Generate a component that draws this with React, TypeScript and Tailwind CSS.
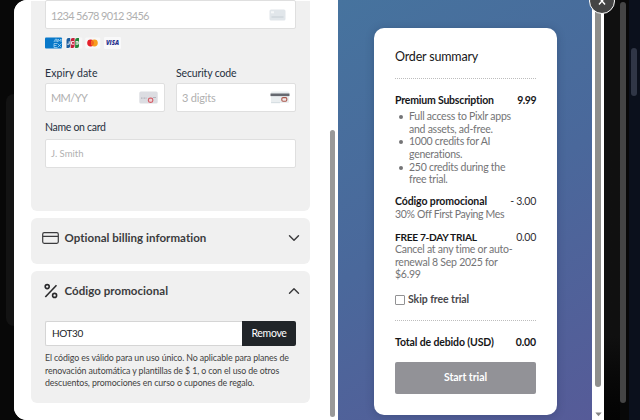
import React, { useState } from "react";
import { ChevronDown, ChevronUp } from "lucide-react";

const perks = [
  ["Full access to Pixlr apps", "and assets, ad-free."],
  ["1000 credits for AI", "generations."],
  ["250 credits during the", "free trial."],
];

function CardBrands() {
  return (
    <div className="mt-[8px] flex h-[12px] gap-[2px]">
      {/* Amex */}
      <svg width="18" height="12" viewBox="0 0 18 12">
        <rect x="0" y="0.5" width="17" height="11" rx="1" fill="#0878c9" />
        <path d="M9 5 10.5 2h1l1 3M10 4h2M13 5V2l1.5 2L16 2v3M12 6.5H9v4h3M9 8.5h2.5M12.5 6.5l4 4M16.5 6.5l-4 4" stroke="#b5dcf5" strokeWidth="0.7" fill="none" />
      </svg>
      {/* JCB */}
      <svg width="18" height="12" viewBox="0 0 18 12">
        <rect x="0.3" y="0.5" width="17" height="11" rx="1" fill="#f7f7f7" />
        <path d="M1.500 11V3a2 2 0 0 1 2-2h1.700v8a2 2 0 0 1-2 2z" fill="#1d5d9c" />
        <path d="M5.700 11V3a2 2 0 0 1 2-2h1.900v8a2 2 0 0 1-2 2z" fill="#c4213b" />
        <path d="M10.100 11V3a2 2 0 0 1 2-2h1.900v8a2 2 0 0 1-2 2z" fill="#23863c" />
        <path d="M4.200 4.300v2.900H2.200M9 4.600H6.500v2.600h2.500M10.700 4.600h2.500v2.600h-2.500M10.700 5.900h2.500" stroke="#fff" strokeWidth="0.9" fill="none" />
      </svg>
      {/* Mastercard */}
      <svg width="18" height="12" viewBox="0 0 18 12">
        <rect x="0.3" y="0.5" width="15" height="11" rx="1" fill="#f8f8f8" />
        <circle cx="5.600" cy="6" r="3.4" fill="#e5202b" />
        <circle cx="9.400" cy="6" r="3.4" fill="#f79d1d" />
        <path d="M7.500 3.180a3.400 3.400 0 0 1 0 5.640 3.400 3.400 0 0 1 0-5.640z" fill="#f4671f" />
      </svg>
      {/* Visa */}
      <div className="-ml-px flex h-[12px] w-[17px] items-center justify-center rounded-[1px] bg-[#f9f9fa] font-['Open_Sans',sans-serif] text-[6px] font-extrabold italic leading-none text-[#28338f]">
        VISA
      </div>
    </div>
  );
}

function NumberIcon() {
  return (
    <svg width="17" height="12" viewBox="0 0 17 12">
      <rect x="0.5" y="0.5" width="16" height="11" rx="1.5" fill="#e1e6ea" />
      <rect x="2" y="2.3" width="3" height="2" fill="#f5f7f8" />
      <path d="M2.500 8h12" stroke="#c6ced4" strokeWidth="1" />
    </svg>
  );
}

function ExpiryIcon() {
  return (
    <svg width="19" height="13" viewBox="0 0 19 13">
      <rect x="0.3" y="0.5" width="18.400" height="12" rx="1.5" fill="#dcdde2" />
      <path d="M2 7.200h6" stroke="#b4b5bd" strokeWidth="1.200" strokeDasharray="1 0.500" />
      <path d="M14 6.500h3" stroke="#b4b5bd" strokeWidth="1" />
      <rect x="9.400" y="7.200" width="4.400" height="4.200" rx="1.800" fill="#f0d5d8" stroke="#d4626c" strokeWidth="1.200" />
    </svg>
  );
}

function CvcIcon() {
  return (
    <svg width="20" height="13" viewBox="0 0 20 13">
      <rect x="1" y="0.500" width="18" height="11.500" rx="1.300" fill="#eaeef0" />
      <path d="M1 11.700h9" stroke="#ccd5da" strokeWidth="0.800" />
      <rect x="0.500" y="2.500" width="19" height="2.600" fill="#65686f" />
      <rect x="11.800" y="6.600" width="5" height="3.700" rx="1.200" fill="#f4e8e6" stroke="#a9574c" strokeWidth="1.100" />
    </svg>
  );
}

interface FieldProps {
  placeholder: string;
  className: string;
  icon?: React.ReactNode;
}

function Field({ placeholder, className, icon }: FieldProps) {
  return (
    <div className="flex h-[29px] w-full items-center justify-between rounded-[2px] border border-[#dfdfdf] bg-white pl-[5px]">
      <span className={`whitespace-nowrap text-[#b0b0b0] ${className}`}>{placeholder}</span>
      {icon}
    </div>
  );
}

function PaymentForm() {
  return (
    <div className="flex h-[420px] w-[324px] shrink-0 justify-between overflow-hidden bg-white">
      <div className="ml-[17px] flex w-[279px] flex-col gap-[7px] pt-px">
        <section className="h-[210px] shrink-0 rounded-b-[6px] bg-[#f0f0f0] px-[14px]">
          <div className="-mt-px">
            <Field placeholder="1234 5678 9012 3456" className="pt-[3px] text-[11px] tracking-[-0.67px]" icon={<div className="mr-[9px]"><NumberIcon /></div>} />
          </div>
          <CardBrands />
          <div className="mt-[17px] flex gap-[11px] text-[#273040]">
            <div className="w-[120px]">
              <div className="mb-[3px] h-[14px] whitespace-nowrap text-[10.500px] leading-[14px] tracking-[0.08px]">Expiry date</div>
              <Field placeholder="MM/YY" className="pt-[2px] text-[11px] tracking-[-0.6px]" icon={<div className="mr-[6px]"><ExpiryIcon /></div>} />
            </div>
            <div className="w-[120px]">
              <div className="mb-[3px] h-[14px] whitespace-nowrap text-[10.500px] leading-[14px] tracking-[-0.15px]">Security code</div>
              <Field placeholder="3 digits" className="pt-[2px] text-[11px] tracking-[-0.2px]" icon={<div className="mr-[5px]"><CvcIcon /></div>} />
            </div>
          </div>
          <div className="mb-[5px] mt-[8px] h-[14px] text-[10.500px] leading-[14px] tracking-[-0.3px] text-[#273040]">Name on card</div>
          <Field placeholder="J. Smith" className="pt-px text-[9.500px]" />
        </section>

        <section className="flex h-[46px] shrink-0 items-start rounded-[6px] bg-[#f0f0f0] pl-[11px] pr-[10px] pt-[10px]">
          <svg width="17" height="20" viewBox="0 0 17 20" fill="none" stroke="#3b3b3d" strokeWidth="1.200">
            <rect x="0.700" y="4.700" width="15.600" height="10.600" rx="1.500" />
            <path d="M0.700 8.300h15.600" />
          </svg>
          <h3 className="ml-[5.500px] flex-1 whitespace-nowrap text-[11.500px] font-bold leading-5 tracking-[0.04px] text-[#3b3b3d]">Optional billing information</h3>
          <ChevronDown className="-mr-[3px] h-5 w-[18px] text-[#3b3b3d]" strokeWidth={1.9} />
        </section>

        <section className="h-[132px] shrink-0 rounded-[6px] bg-[#f0f0f0]">
          <div className="flex items-start pl-[13px] pr-[10px] pt-[10px]">
            <svg width="14" height="20" viewBox="0 0 14 20" fill="none" stroke="#29292b" strokeWidth="1.600">
              <path d="M12.500 4.200 1.300 16" />
              <circle cx="3.200" cy="5.600" r="2" />
              <circle cx="10.600" cy="14.400" r="2" />
            </svg>
            <h3 className="ml-[6.500px] flex-1 whitespace-nowrap text-[11.500px] font-bold leading-5 tracking-[0.05px] text-[#3b3b3d]">Código promocional</h3>
            <ChevronUp className="-mr-[3px] h-5 w-[18px] text-[#3b3b3d]" strokeWidth={1.9} />
          </div>
          <div className="mx-[14px] mt-[20px] flex h-[25px]">
            <div className="flex flex-1 items-center rounded-l-[2px] border border-r-0 border-[#d5d5d5] bg-white pl-[6px] text-[10px] tracking-[-0.4px] text-[#202226]">HOT30</div>
            <button className="w-[54px] rounded-r-[2px] bg-[#212529] text-[10.500px] tracking-[-0.3px] text-white">Remove</button>
          </div>
          <p className="ml-[14px] mt-[6px] whitespace-nowrap text-[8.800px] leading-[12.600px] tracking-[-0.105px] text-[#3f3f41]">
            <span className="block">El código es válido para un uso único. No aplicable para planes de</span>
            <span className="block">renovación automática y plantillas de $ 1, o con el uso de otros</span>
            <span className="block">descuentos, promociones en curso o cupones de regalo.</span>
          </p>
        </section>
      </div>
      <div className="mr-[3px] mt-[130px] h-[287px] w-[5px] rounded-full bg-[#999999]" />
    </div>
  );
}

function OrderSummary() {
  const [skip, setSkip] = useState(false);

  return (
    <div className="flex h-[420px] w-[254px] shrink-0 items-start bg-linear-[150deg,#46739e_0%,#4a689b_50%,#565b98_100%] pl-9 pt-7">
      <div className="h-[387px] w-[183px] rounded-[10px] bg-white px-[21px] pt-[20px] text-[10.500px] tracking-[-0.25px] text-[#747476] shadow-[0_1px_8px_rgba(20,30,60,0.25)]">
        <h2 className="h-[18px] whitespace-nowrap text-[12.500px] leading-[18px] tracking-[-0.18px] text-[#171719]">Order summary</h2>
        <div className="mt-[12px] border-t border-dotted border-[#bdbdbd]" />

        <div className="mt-[14px] flex h-[14px] justify-between whitespace-nowrap font-bold leading-[14px] tracking-[-0.2px] text-[#161618]">
          <span>Premium Subscription</span>
          <span className="tracking-[-0.5px]">9.99</span>
        </div>
        <ul className="mt-[3px] whitespace-nowrap leading-[12.650px]">
          {perks.map(([first, second]) => (
            <li key={first} className="flex">
              <span className="ml-[4px] mt-[5px] h-[4px] w-[4px] rounded-full bg-[#747476]" />
              <div className="ml-[6px]">
                <span className="block">{first}</span>
                <span className="block">{second}</span>
              </div>
            </li>
          ))}
        </ul>

        <div className="mt-[9.500px] whitespace-nowrap leading-[12.600px]">
          <div className="flex justify-between text-[#303033]">
            <span className="font-bold tracking-[-0.1px] text-[#161618]">Código promocional</span>
            <span>- 3.00</span>
          </div>
          <div className="tracking-[-0.35px]">30% Off First Paying Mes</div>
        </div>

        <div className="mt-[10px] whitespace-nowrap leading-[12.600px]">
          <div className="flex justify-between text-[#303033]">
            <span className="text-[10.200px] font-bold tracking-[-0.3px] text-[#161618]">FREE 7-DAY TRIAL</span>
            <span>0.00</span>
          </div>
          <div>Cancel at any time or auto-</div>
          <div>renewal 8 Sep 2025 for</div>
          <div>$6.99</div>
        </div>

        <label className="mt-[11.500px] flex h-[14px] items-center whitespace-nowrap font-bold tracking-[-0.07px] text-[#48484b]">
          <input
            type="checkbox"
            checked={skip}
            onChange={() => setSkip(!skip)}
            className="mr-[3px] h-[10px] w-[10px] appearance-none rounded-[1px] border border-[#929294] bg-white checked:bg-[#48484b]"
          />
          Skip free trial
        </label>
        <div className="mt-[13px] border-t border-dotted border-[#bdbdbd]" />
        <div className="mt-[14px] flex h-[14px] justify-between whitespace-nowrap font-bold leading-[14px] tracking-[-0.12px] text-[#161618]">
          <span>Total de debido (USD)</span>
          <span>0.00</span>
        </div>
        <button className="mt-[13px] h-[32px] w-full rounded-[2px] bg-[#929297] font-bold tracking-[-0.05px] text-white">Start trial</button>
      </div>
    </div>
  );
}

export default function App() {
  return (
    <div className="relative flex h-[420px] w-[640px] overflow-hidden bg-[#080808] font-['Lato',sans-serif]">
      <div className="flex h-full w-[14px] shrink-0 items-center">
        <div className="ml-[6px] h-[232px] w-2 rounded-l-[8px] bg-[#131313]" />
      </div>
      <div className="flex h-full w-[590px] shrink-0 overflow-hidden rounded-l-[13px] bg-white">
        <PaymentForm />
        <OrderSummary />
        <div className="flex w-[12px] flex-col items-center bg-white">
          <div className="h-[387px] w-[6px] rounded-b-full bg-[#8e8e8c]" />
          <svg className="mt-[25px]" width="7" height="5" viewBox="0 0 7 5">
            <path d="M0.300 0.500h6.400L3.500 4.300z" fill="#858585" />
          </svg>
        </div>
      </div>
      <div className="h-full w-[16px] shrink-0 bg-linear-to-b from-[#101010] from-80% to-[#030303]" />
      <div className="mt-[2px] h-[401px] w-[6px] shrink-0 rounded-full bg-[#454545]" />
      <div className="w-[3px] shrink-0" />
      <div className="flex-1 bg-[#0b101c] pl-[2px] pt-[48px]">
        <div className="h-[48px] w-[6px] rounded-full bg-[#303646]" />
      </div>
      <button className="absolute left-[589px] top-[-12px] flex h-[26px] w-[26px] items-center justify-center rounded-full border border-white bg-[#444444]">
        <svg width="8" height="8" viewBox="0 0 8 8" stroke="#fff" strokeWidth="1.400">
          <path d="m1 .5 6 7M7 .5l-6 7" />
        </svg>
      </button>
    </div>
  );
}
